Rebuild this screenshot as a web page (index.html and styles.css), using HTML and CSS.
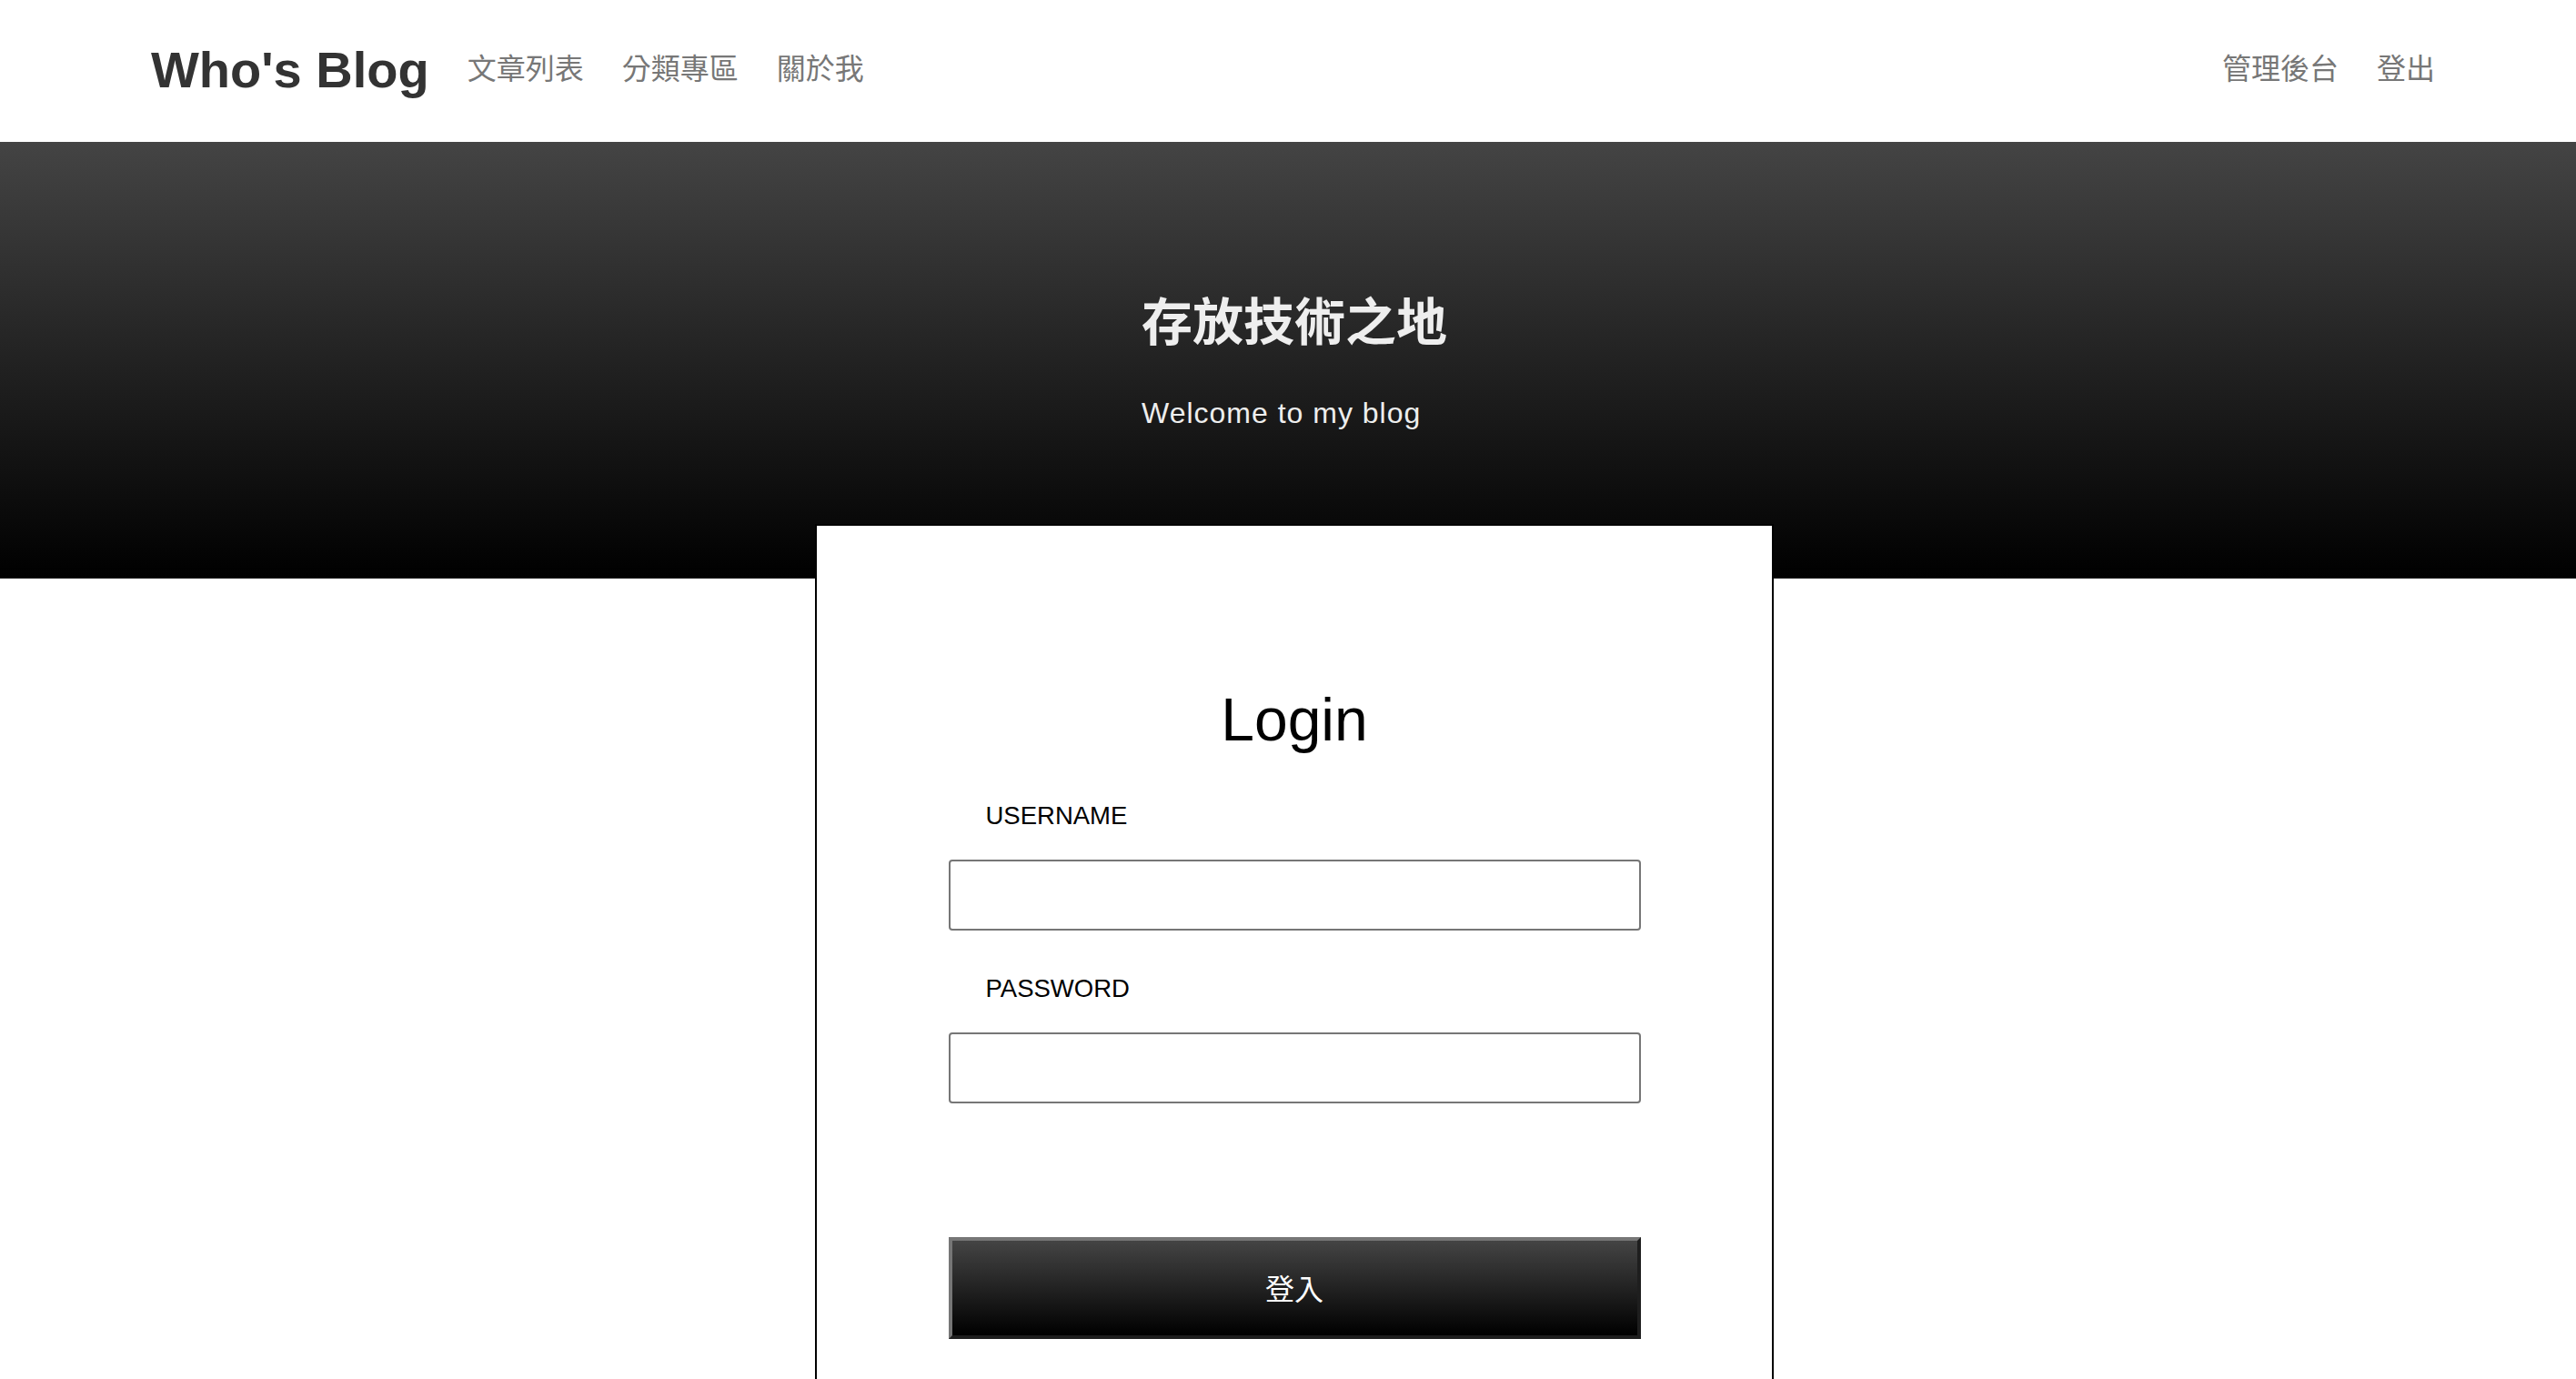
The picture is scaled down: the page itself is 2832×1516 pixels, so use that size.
FILE: index.html
```html
<!DOCTYPE html>
<html lang="zh-Hant">
<head>
<meta charset="utf-8">
<title>Who's Blog - Login</title>
<link rel="stylesheet" href="styles.css">
</head>
<body>
<nav class="navbar">
  <div class="nav-left">
    <a class="brand" href="#">Who's Blog</a>
    <a class="nav-link" href="#">文章列表</a>
    <a class="nav-link" href="#">分類專區</a>
    <a class="nav-link" href="#">關於我</a>
  </div>
  <div class="nav-right">
    <a class="nav-link" href="#">管理後台</a>
    <a class="nav-link" href="#">登出</a>
  </div>
</nav>
<header class="hero">
  <div class="hero-inner">
    <h1 class="hero-title">存放技術之地</h1>
    <p class="hero-sub">Welcome to my blog</p>
  </div>
</header>
<main class="main">
  <section class="card">
    <h2 class="login-title">Login</h2>
    <form class="login-form">
      <label class="field-label first" for="username">USERNAME</label>
      <input class="field-input" id="username" type="text">
      <label class="field-label" for="password">PASSWORD</label>
      <input class="field-input" id="password" type="password">
      <button class="submit-btn" type="button">登入</button>
    </form>
  </section>
</main>
</body>
</html>
```
FILE: styles.css
```css
* {
  box-sizing: border-box;
}

html, body {
  margin: 0;
  padding: 0;
  background: #ffffff;
}

body {
  font-family: "Liberation Sans", "Noto Sans CJK TC", sans-serif;
  color: #000;
  overflow-x: hidden;
}

a {
  text-decoration: none;
}

/* ---------- Navbar ---------- */
.navbar {
  height: 156px;
  display: flex;
  align-items: center;
  justify-content: space-between;
  padding: 0 155px 3px 166px;
  background: #ffffff;
}

.nav-left,
.nav-right {
  display: flex;
  align-items: center;
  gap: 42px;
}

.brand {
  font-family: "Liberation Sans", "Noto Sans CJK TC", sans-serif;
  font-weight: 700;
  font-size: 56px;
  line-height: 1;
  color: #333333;
}

.nav-link {
  font-family: "Noto Sans CJK TC", "Liberation Sans", sans-serif;
  font-size: 32px;
  line-height: 1.2;
  color: #777777;
  position: relative;
  top: -3px;
}

/* ---------- Hero ---------- */
.hero {
  height: 480px;
  padding: 160px 0 0 14px;
  background: linear-gradient(to bottom, #444444 0%, #000000 100%);
}

.hero-inner {
  width: fit-content;
  margin: 0 auto;
}

.hero-title {
  margin: 0;
  font-family: "Noto Sans CJK TC", sans-serif;
  font-weight: 700;
  font-size: 56px;
  line-height: 67px;
  color: #eeeeee;
}

.hero-sub {
  margin: 51px 0 0;
  font-family: "Liberation Sans", "Noto Sans CJK TC", sans-serif;
  font-size: 32px;
  line-height: 40px;
  letter-spacing: 1px;
  color: #eeeeee;
}

/* ---------- Login card ---------- */
.main {
  padding-left: 14px;
}

.card {
  width: 1054px;
  margin: -60px auto 0;
  background: #ffffff;
  border: 2px solid #000000;
  padding: 173px 0 160px;
}

.login-title {
  margin: 0;
  text-align: center;
  font-family: "Liberation Sans", sans-serif;
  font-weight: 400;
  font-size: 66px;
  line-height: 80px;
  color: #000000;
}

.login-form {
  width: 761px;
  margin: 0 auto;
  display: flex;
  flex-direction: column;
}

.field-label {
  margin: 46px 0 0 41px;
  font-family: "Liberation Sans", sans-serif;
  font-size: 27.5px;
  line-height: 36px;
  color: #000000;
}

.field-label.first {
  margin-top: 48px;
}

.field-input {
  margin-top: 30px;
  height: 78px;
  width: 100%;
  border: 2px solid #767676;
  border-radius: 4px;
  background: #ffffff;
  padding: 0 12px;
  font-size: 28px;
  outline: none;
}

.submit-btn {
  margin-top: 147px;
  height: 112px;
  width: 100%;
  border-style: solid;
  border-width: 4px;
  border-color: #767676 #1e1e1e #1e1e1e #767676;
  background: linear-gradient(to bottom, #444444 0%, #000000 100%);
  color: #ffffff;
  font-family: "Noto Sans CJK TC", sans-serif;
  font-size: 32px;
  line-height: 1;
  padding: 0 0 3px;
  cursor: pointer;
}
```
